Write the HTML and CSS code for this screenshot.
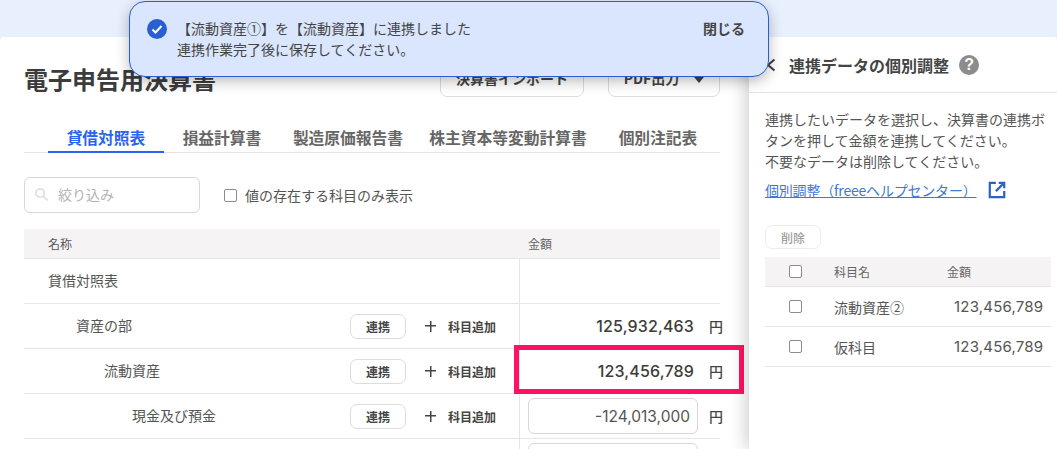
FILE: index.html
```html
<!DOCTYPE html>
<html lang="ja">
<head>
<meta charset="utf-8">
<title>電子申告用決算書</title>
<link rel="stylesheet" href="styles.css">
</head>
<body>
<div class="page">
  <main class="main">
    <header class="head">
      <h1 class="title">電子申告用決算書</h1>
      <div class="actions">
        <button class="btn btn-import">決算書インポート</button>
        <button class="btn btn-pdf">PDF出力<span class="caret"></span></button>
      </div>
    </header>
    <nav class="tabs">
      <a class="tab active">貸借対照表</a>
      <a class="tab">損益計算書</a>
      <a class="tab">製造原価報告書</a>
      <a class="tab">株主資本等変動計算書</a>
      <a class="tab">個別注記表</a>
    </nav>
    <div class="filter">
      <div class="search">
        <svg class="search-icon" viewBox="0 0 16 16"><circle cx="6.5" cy="6.5" r="4.5"/><path d="M10 10l4.5 4.5"/></svg>
        <span>絞り込み</span>
      </div>
      <label class="check-label"><span class="box"></span>値の存在する科目のみ表示</label>
    </div>
    <div class="table">
      <div class="row thead"><div class="c-name">名称</div><div class="c-val">金額</div></div>
      <div class="row r0"><div class="c-name"><span class="n">貸借対照表</span></div><div class="c-val"></div></div>
      <div class="row">
        <div class="c-name l1"><span class="n">資産の部</span><span class="link">連携</span><span class="add"><i class="plus"></i>科目追加</span></div>
        <div class="c-val"><b class="amt">125,932,463</b><span class="yen">円</span></div>
      </div>
      <div class="row">
        <div class="c-name l2"><span class="n">流動資産</span><span class="link">連携</span><span class="add"><i class="plus"></i>科目追加</span></div>
        <div class="c-val"><b class="amt">123,456,789</b><span class="yen">円</span><div class="highlight"></div></div>
      </div>
      <div class="row">
        <div class="c-name l3"><span class="n">現金及び預金</span><span class="link">連携</span><span class="add"><i class="plus"></i>科目追加</span></div>
        <div class="c-val"><span class="input">-124,013,000</span><span class="yen">円</span></div>
      </div>
      <div class="row">
        <div class="c-name"></div>
        <div class="c-val"><span class="input"></span><span class="yen"></span></div>
      </div>
    </div>
  </main>
  <aside class="panel">
    <div class="panel-head">
      <svg class="back" viewBox="0 0 12 14"><path d="M9.5 1.5L3 7l6.5 5.5"/></svg>
      <h2>連携データの個別調整</h2>
      <span class="help">?</span>
    </div>
    <div class="panel-body">
      <p class="desc">連携したいデータを選択し、決算書の連携ボタンを押して金額を連携してください。<br>不要なデータは削除してください。</p>
      <p class="help-link"><a>個別調整（freeeヘルプセンター）</a><svg viewBox="0 0 18 18"><path d="M8 2.5H2.5v13h13V10M10.5 2.5h5v5M15.5 2.5L8 10"/></svg></p>
      <button class="del">削除</button>
    </div>
    <div class="ptable">
      <div class="prow phead"><span class="box"></span><span class="pn">科目名</span><span class="pa">金額</span></div>
      <div class="prow"><span class="box"></span><span class="pn">流動資産②</span><span class="pv">123,456,789</span></div>
      <div class="prow"><span class="box"></span><span class="pn">仮科目</span><span class="pv">123,456,789</span></div>
    </div>
  </aside>
</div>
<div class="toast">
  <svg class="ok" viewBox="0 0 20 20"><circle cx="10" cy="10" r="10"/><path d="M5.5 10.5l3 3 6-6.5"/></svg>
  <div class="msg">【流動資産①】を【流動資産】に連携しました<br><span class="msg2">連携作業完了後に保存してください。</span></div>
  <span class="close">閉じる</span>
</div>
</body>
</html>
```

FILE: styles.css
```css
* { box-sizing: border-box; }
html, body { margin: 0; padding: 0; }
body {
  width: 1057px; height: 449px; overflow: hidden; position: relative;
  background: #e9f0fd;
  font-family: "Noto Sans CJK JP", "Liberation Sans", sans-serif;
  color: #444; font-size: 14px;
}
.page { margin-top: 37px; height: 412px; display: flex; background: #fff; border-radius: 4px 4px 0 0; overflow: hidden; }
.main { width: 749px; flex: none; padding: 0 29px 0 24px; }
.head { display: flex; justify-content: space-between; height: 60px; padding-top: 23px; }
.title { margin: 2px 0 0; font-size: 24px; line-height: 34px; font-weight: 700; color: #3c3c3c; }
.actions { display: flex; gap: 24px; height: 37px; }
.btn { background: #fff; border: 1px solid #dcdcdc; border-radius: 7px; font: 700 14px "Noto Sans CJK JP", sans-serif; color: #444; height: 37px; padding: 0 0 2px; }
.btn-import { width: 144px; }
.btn-pdf { width: 112px; }
.caret { display: inline-block; border: 5px solid transparent; border-top: 6px solid #444; border-bottom: 0; margin-left: 15px; vertical-align: middle; }
.tabs { display: flex; border-bottom: 1px solid #e4e4e4; height: 56px; padding: 30px 0 0 24px; }
.tab { font-weight: 700; font-size: 15.75px; color: #666; line-height: 22px; width: 116px; text-align: center; height: 26px; white-space: nowrap; }
.tab:nth-child(3) { width: 136px; }
.tab:nth-child(4) { width: 184px; }
.tab.active { color: #2864f0; border-bottom: 2px solid #2864f0; }
.filter { display: flex; align-items: center; margin-top: 24px; height: 36px; }
.search { width: 176px; height: 36px; border: 1px solid #d7d7d7; border-radius: 6px; display: flex; align-items: center; padding: 0 0 2px 9px; color: #b4b4b4; gap: 9px; }
.search-icon { width: 15px; height: 15px; fill: none; stroke: #dcdcdc; stroke-width: 1.6; }
.check-label { display: flex; align-items: center; margin-left: 24px; color: #555; }
.box { display: block; flex: none; width: 13px; height: 13px; border: 1.5px solid #8c8c8c; border-radius: 2px; background: #fff; }
.check-label .box { margin-right: 8px; }
.table { margin-top: 16px; }
.row { display: flex; height: 45px; border-bottom: 1px solid #e6e6e6; }
.thead { height: 30px; background: #f5f3f4; font-size: 12px; color: #666; }
.c-name { width: 495px; flex: none; display: flex; align-items: center; padding-left: 24px; color: #555; }
.c-name.l1 { padding-left: 52px; }
.c-name.l2 { padding-left: 80px; }
.c-name.l3 { padding-left: 108px; }
.n { flex: 1; margin-bottom: 2px; }
.c-val { flex: 1; display: flex; align-items: center; position: relative; justify-content: flex-end; border-left: 1px solid #e6e6e6; }
.thead .c-val { border: 0; justify-content: flex-start; padding-left: 9px; }
.link { width: 56px; height: 25px; border: 1px solid #dcdcdc; border-radius: 7px; font-size: 12px; font-weight: 700; color: #444; display: flex; align-items: center; justify-content: center; margin-right: 19px; }
.add { display: flex; align-items: center; font-size: 12px; font-weight: 700; color: #444; width: 71px; margin-right: 23px; white-space: nowrap; }
.plus { display: block; width: 11px; height: 11px; margin-right: 12px; background: linear-gradient(#444,#444) center/100% 1.5px no-repeat, linear-gradient(#444,#444) center/1.5px 100% no-repeat; }
.amt { font-family: "Inter", "Noto Sans", sans-serif; font-weight: 500; font-size: 16px; letter-spacing: .15px; color: #3c3c3c; margin-right: 15px; margin-bottom: 1px; }
.yen { font-weight: 500; margin-right: -3px; width: 14px; flex: none; color: #444; }
.input { width: 170px; height: 36px; border: 1px solid #d7d7d7; border-radius: 6px; display: flex; align-items: center; justify-content: flex-end; padding-right: 7px; font-family: "Inter", sans-serif; font-size: 15.5px; color: #555; margin-right: 11px; }
.highlight { position: absolute; left: -6px; top: -4px; width: 230px; height: 49px; border: 5px solid #ff1264; }
.panel { width: 308px; flex: none; background: #fff; box-shadow: -5px 0 14px rgba(0,0,0,.16); position: relative; }
.panel-head { height: 56px; border-bottom: 1px solid #e6e6e6; display: flex; align-items: center; padding-left: 16px; }
.back { width: 12px; height: 14px; fill: none; stroke: #3c3c3c; stroke-width: 2; margin-right: 12px; }
.panel-head h2 { margin: 0; font-size: 16px; font-weight: 700; line-height: 24px; color: #444; }
.help { width: 20px; height: 20px; border-radius: 50%; background: #8c8c8c; color: #fff; font: 700 16px "Liberation Sans", sans-serif; display: flex; align-items: center; justify-content: center; margin-left: 10px; }
.panel-body { padding: 16px 8px 0 16px; }
.desc { margin: 0; line-height: 21px; color: #555; }
.help-link { margin: 8px 0 0; line-height: 20px; display: flex; align-items: center; height: 20px; }
.help-link a { color: #3c78dc; text-decoration: underline; letter-spacing: -.2px; }
.help-link svg { width: 20px; height: 20px; margin-left: 10px; fill: none; stroke: #2a62c8; stroke-width: 2; }
.del { display: block; margin: 25px 0 0; width: 56px; height: 24px; background: #fff; border: 1px solid #ececec; border-radius: 7px; font: 500 12px "Noto Sans CJK JP", sans-serif; color: #a0a0a0; padding: 0; }
.ptable { margin: 8px 6px 0 16px; }
.prow { display: flex; align-items: center; height: 40px; border-bottom: 1px solid #e6e6e6; color: #555; padding-left: 24px; }
.phead { height: 30px; background: #f5f3f4; font-size: 12px; color: #666; }
.pn { margin-left: 32px; width: 113px; flex: none; }
.pv { font-family: "Inter", sans-serif; font-size: 15px; letter-spacing: .2px; margin-left: 7px; white-space: nowrap; }
.toast { position: absolute; left: 129px; top: 1px; width: 640px; height: 76px; background: #d9e6fd; border: 1px solid #2a5fd0; border-radius: 16px; box-shadow: 0 4px 14px rgba(0,0,0,.28); display: flex; align-items: flex-start; padding: 17px 23px 0 17px; }
.ok { width: 20px; height: 20px; flex: none; margin-right: 10px; }
.ok circle { fill: #2a5fd0; }
.ok path { fill: none; stroke: #fff; stroke-width: 2; }
.msg { flex: 1; line-height: 21px; color: #444; margin-top: -1px; }
.close { font-weight: 700; color: #444; line-height: 21px; margin-top: -1px; }
```
